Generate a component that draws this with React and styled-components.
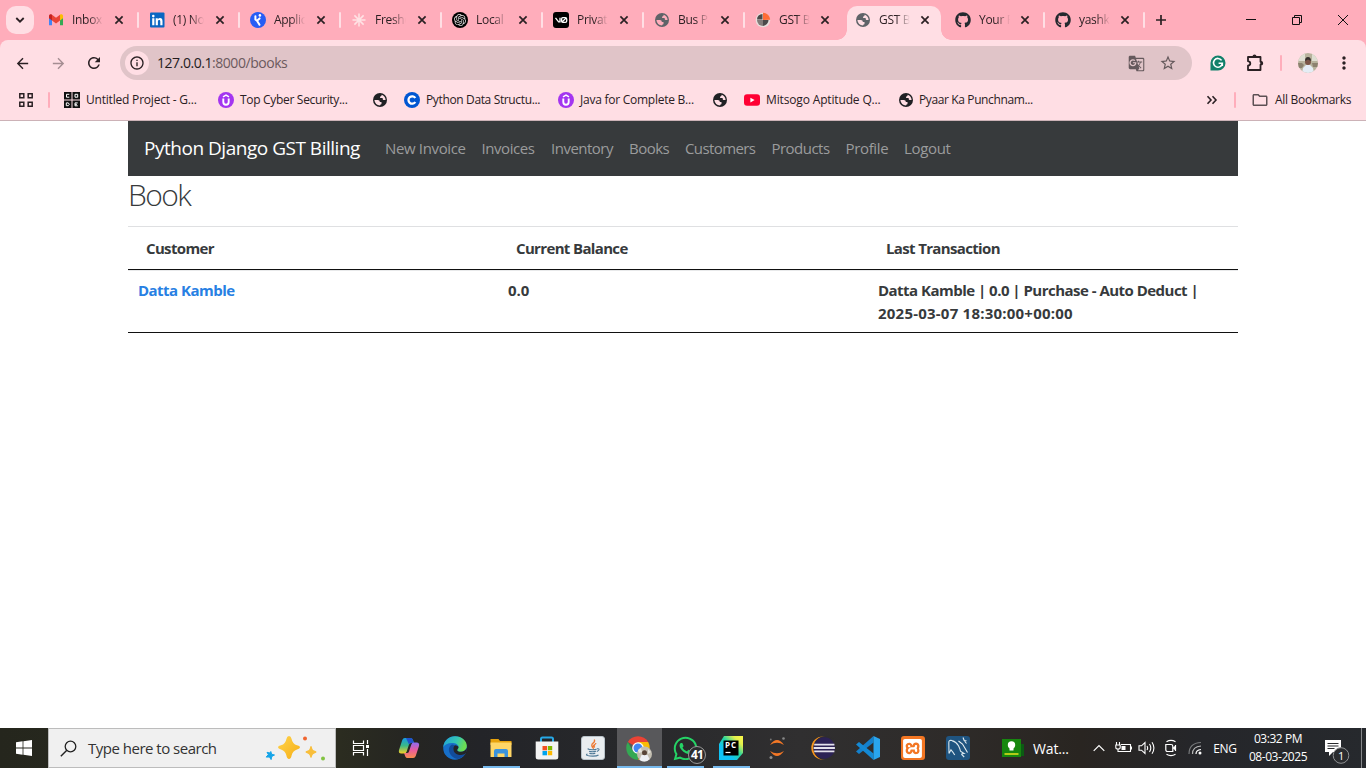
import React from "react";
import styled, { createGlobalStyle, css } from "styled-components";
import { FaGithub, FaWhatsapp, FaJava } from "react-icons/fa";
import { SiOpenai, SiXampp } from "react-icons/si";
import { MdArrowBack, MdArrowForward, MdRefresh, MdStarBorder, MdInfoOutline, MdGTranslate, MdMoreVert, MdOutlineFolder } from "react-icons/md";

const Global = createGlobalStyle`
  * { box-sizing: border-box; }
  body { margin: 0; background: #fff; font-family: "Segoe UI", "Open Sans", "Noto Sans", sans-serif; overflow: hidden; }
  svg { display: block; flex: none; }
`;

const Screen = styled.div`
  width: 1366px; height: 768px; display: flex; flex-direction: column; overflow: hidden;
`;

/* ---------- browser chrome ---------- */
const TabStrip = styled.div`
  height: 40px; flex: none; background: #ffadbb; display: flex; align-items: flex-end;
`;
const TabSearch = styled.div`
  width: 28px; height: 28px; margin: 0 4px 6px 6px; border-radius: 10px; background: #ffdee4;
  display: flex; align-items: center; justify-content: center;
`;
const Tab = styled.div`
  width: ${(p) => p.$w || 101}px; height: 40px; flex: none; display: flex; align-items: center; padding-left: 10px;
`;
const ActiveTab = styled(Tab)`
  width: 94px; height: 34px; margin: 0 4px 0 2px; padding: 0 0 6px 8px; background: #ffdee4;
  border-radius: 10px 10px 0 0; position: relative;
  &::before, &::after {
    content: ""; position: absolute; bottom: 0; width: 10px; height: 10px;
  }
  &::before { left: -10px; background: radial-gradient(circle at 0 0, transparent 9.5px, #ffdee4 10px); }
  &::after { right: -10px; background: radial-gradient(circle at 100% 0, transparent 9.5px, #ffdee4 10px); }
`;
const Favicon = styled.span`
  width: 16px; height: 16px; flex: none; display: flex; align-items: center; justify-content: center;
`;
const TabTitle = styled.span`
  width: 31px; margin-left: 8px; white-space: nowrap; font-size: 12px; line-height: 18px;
  letter-spacing: -0.3px; color: #2b1f22;
  -webkit-mask-image: linear-gradient(90deg, #000 55%, transparent 100%);
  mask-image: linear-gradient(90deg, #000 55%, transparent 100%);
`;
const TabClose = styled.span`
  width: 16px; height: 16px; margin-left: ${(p) => p.$ml}px; display: flex; align-items: center; justify-content: center;
`;
const Divider = styled.span`
  width: 2px; height: 16px; border-radius: 1px; background: ${(p) => p.$c || "#ffdee4"}; margin: 0 ${(p) => p.$mr || 0}px 0 ${(p) => p.$ml || 0}px;
`;
const NewTab = styled.div`
  width: 32px; height: 40px; display: flex; align-items: center; justify-content: center;
`;
const WindowButtons = styled.div`
  margin-left: auto; height: 40px; display: flex;
  svg { width: 46px; height: 40px; }
`;
const Corners = styled.div`
  background: #ffadbb; height: 46px; flex: none;
`;
const Toolbar = styled.div`
  height: 46px; background: #ffdee4; border-radius: 8px 8px 0 0; display: flex; align-items: center; color: #2a2023;
`;
const NavIcon = styled.span`
  width: 36px; height: 46px; display: flex; align-items: center; justify-content: center;
  opacity: ${(p) => (p.$off ? 0.42 : 1)};
  margin-left: ${(p) => p.$ml || 0}px;
`;
const Omnibox = styled.div`
  width: 1072px; height: 34px; margin-left: 8px; border-radius: 17px; background: #e0c4c8;
  display: flex; align-items: center; padding: 0 15px 0 5px;
`;
const SiteInfo = styled.span`
  width: 24px; height: 24px; border-radius: 50%; background: #ffdee4; display: flex; align-items: center; justify-content: center;
`;
const Url = styled.span`
  flex: 1; margin-left: 8px; font-size: 14px; line-height: 20px; letter-spacing: -0.45px; color: #6c5a5e;
  b { font-weight: 400; color: #241c1e; }
`;
const OmniActions = styled.span`
  display: flex; gap: 14px; color: #65595c; align-items: center;
`;
const Extensions = styled.div`
  flex: 1; display: flex; align-items: center; padding-left: 18px;
`;
const Avatar = styled.span`
  width: 20px; height: 20px; margin-left: 16px; border-radius: 50%; overflow: hidden;
`;
const BookmarksBar = styled.div`
  height: 35px; flex: none; background: #ffdee4; border-bottom: 1px solid #ccb2b7; display: flex; align-items: center;
  padding: 0 0 7px 18px; color: #2a2023;
`;
const Bookmark = styled.div`
  display: flex; align-items: center; width: ${(p) => p.$w}px; flex: none; gap: 6px;
  font-size: 12px; line-height: 16px; white-space: nowrap; letter-spacing: ${(p) => p.$ls || 0}px; color: #2a2023;
`;
const BookmarksEnd = styled.div`
  margin-left: auto; display: flex; align-items: center; padding-right: 14px;
`;

/* ---------- page ---------- */
const Page = styled.main`
  flex: 1; background: #fff; min-height: 0;
`;
const Container = styled.div`
  width: 1110px; margin: 0 auto; color: #373a3c; font-size: 15px; line-height: 23px;
`;
const Navbar = styled.nav`
  height: 55px; background: #373a3c; display: flex; align-items: center; padding-left: 16px;
`;
const Brand = styled.span`
  width: 241px; color: #fff; font-size: 19px; letter-spacing: -0.48px; white-space: nowrap;
`;
const NavLink = styled.a`
  width: ${(p) => p.$w}px; color: #9b9c9d; font-size: 15px; letter-spacing: ${(p) => p.$ls}px; white-space: nowrap;
`;
const Title = styled.h2`
  margin: 0; height: 50px; padding-top: 1px; font-size: 30px; font-weight: 300; line-height: 36px; letter-spacing: -1.6px;
`;
const Table = styled.div`
  border-top: 1px solid #dfe0e2; font-weight: 700;
`;
const HeadRow = styled.div`
  display: grid; grid-template-columns: repeat(3, 370px); height: 43px; padding-top: 10px; border-bottom: 1px solid #111;
  span { padding-left: 18px; letter-spacing: -0.65px; }
`;
const Row = styled.div`
  display: grid; grid-template-columns: repeat(3, 370px); height: 63px; padding-top: 8px;
  border-top: 1px solid #e8e9ea; border-bottom: 1px solid #111;
`;
const Cell = styled.div`
  padding-left: 10px; letter-spacing: -0.1px;
`;
const CustomerLink = styled.a`
  color: #2780e3; letter-spacing: -0.52px;
`;
const Line = styled.span`
  display: block; letter-spacing: ${(p) => p.$ls}px; white-space: nowrap;
`;

/* ---------- taskbar ---------- */
const Taskbar = styled.footer`
  height: 40px; flex: none; display: flex; color: #fff;
  background: linear-gradient(90deg, #25261d 0, #2b2c20 340px, #252522 410px, #232428 480px, #27282b 620px, #302f30 800px, #2e2b29 950px, #292521 1080px, #25262a 1200px, #26292d 1366px);
`;
const Start = styled.div`
  width: 48px; display: flex; align-items: center; justify-content: center;
`;
const Search = styled.div`
  width: 288px; background: #f0f0f0; border: 1px solid #bcbcbc; display: flex; align-items: center; padding-left: 11px;
  color: #333; font-size: 15px; letter-spacing: -0.5px;
`;
const SearchHint = styled.span`
  margin-left: 11px; width: 177px; white-space: nowrap;
`;
const AppButton = styled.div`
  width: ${(p) => p.$w || 46}px; height: 40px; display: flex; align-items: center; justify-content: center; position: relative;
  ${(p) => p.$active && css`background: linear-gradient(90deg, transparent 1px, #58585b 1px);`}
  ${(p) => p.$running && css`
    &::after { content: ""; position: absolute; bottom: 0; height: 2px; background: #76b9ed;
      left: ${p.$active ? 1 : 5}px; right: ${p.$active ? 0 : 4}px; }
  `}
`;
const Badge = styled.span`
  position: absolute; left: 26px; top: 18px; width: 18px; height: 18px; border-radius: 50%; border: 1px solid #999;
  background: #2c2d2f; font-size: 12px; font-weight: 700; line-height: 16px; text-align: center; letter-spacing: -0.8px;
`;
const News = styled.div`
  display: flex; align-items: center; margin-left: 22px; width: 85px; gap: 9px; font-size: 14px; letter-spacing: -0.15px; white-space: nowrap;
`;
const TrayIcon = styled.span`
  width: 24px; display: flex; align-items: center; justify-content: center;
`;
const Lang = styled.span`
  width: 36px; text-align: center; align-self: center; font-size: 12px; letter-spacing: -0.35px;
`;
const Clock = styled.div`
  width: 70px; font-size: 12px; line-height: 18px; text-align: center; padding-top: 2px; letter-spacing: -0.45px; white-space: nowrap;
`;
const Notifications = styled.div`
  width: 49px; display: flex; align-items: center; justify-content: center; border-right: 1px solid #85878a;
`;

/* ---------- icons ---------- */
const Disc = styled.span`
  width: ${(p) => p.$size || 16}px; height: ${(p) => p.$size || 16}px; border-radius: ${(p) => p.$r || "50%"}; background: ${(p) => p.$bg}; color: #fff;
  display: flex; align-items: center; justify-content: center; flex: none;
`;
const Cross = () => (
  <svg width="10" height="10" viewBox="0 0 10 10"><path d="M1.4 1.4l7.2 7.2M8.6 1.4L1.4 8.6" stroke="#2b2023" strokeWidth="1.7" /></svg>
);
const Gmail = () => (
  <svg width="16" height="16" viewBox="0 0 16 16">
    <path d="M1 4v9.2h3V6z" fill="#4285f4" /><path d="M15 4v9.2h-3V6z" fill="#34a853" />
    <path d="M1 6.2V4c0-1.7 1.8-2.2 3-1.3v5.7z" fill="#c5221f" /><path d="M12 8.4V2.7c1.2-.9 3-.4 3 1.3v2.2z" fill="#fbbc04" />
    <path d="M4 2.7l4 3 4-3v5.7l-4 3-4-3z" fill="#ea4335" />
  </svg>
);
const LinkedIn = () => (
  <svg width="16" height="16" viewBox="0 0 16 16"><rect x="1" y="0.5" width="14.500" height="15" rx="1" fill="#0a66c2" />
    <circle cx="4.300" cy="4.100" r="1.300" fill="#fff" /><path d="M3.200 6.300h2.200v6.900H3.200zM6.700 6.300h2.100v1c.5-.8 1.300-1.200 2.200-1.200 1.700 0 2.500 1.100 2.500 3.100v4h-2.200V9.600c0-1-.3-1.600-1.100-1.600-.9 0-1.300.6-1.300 1.600v3.600H6.700z" fill="#fff" /></svg>
);
const Compass = () => (
  <svg width="16" height="16" viewBox="0 0 16 16"><circle cx="8" cy="8" r="8" fill="#275df5" />
    <circle cx="9.900" cy="3.400" r="1.300" fill="#fff" /><path d="M9.600 6.400L7 8.800l2.500 4M5.400 4.300v3.200L7 8.800" stroke="#fff" strokeWidth="2" fill="none" strokeLinecap="round" strokeLinejoin="round" /></svg>
);
const Burst = () => (
  <svg width="14" height="14" viewBox="0 0 14 14"><g stroke="#ffe3e5" strokeWidth="1.5"><path d="M7 .5v13M.5 7h13M2.4 2.4l9.2 9.2M11.6 2.4l-9.2 9.2" /></g></svg>
);
const OpenAi = () => (
  <Disc $bg="#000"><SiOpenai size={12} color="#ddd" /></Disc>
);
const VZero = () => (
  <svg width="16" height="16" viewBox="0 0 16 16"><rect width="16" height="16" rx="3" fill="#000" />
    <path d="M2.5 5.8L5.6 9.8H7V5.8M9.8 5.7h2.5q1.4 0 1.4 1.4v1.8q0 1.4-1.4 1.4H9.8q-1.2 0-1.2-1.4V7.1q0-1.4 1.2-1.4zM9 10l4.300-4.100" stroke="#fff" strokeWidth="1.3" fill="none" /></svg>
);
const Globe = ({ c = "#202124", bg = "#ffdee4" }) => (
  <svg width="14" height="14" viewBox="0 0 14 14"><circle cx="7" cy="7" r="7" fill={c} />
    <path d="M8.600 1.700C11 2.300 12.600 4.500 12.600 7H10.500Q9.800 7 9.800 6.200V5.600Q9.800 5.100 9.200 5.100H7.100V4Q7.100 3.300 7.900 3.200 8.700 3 8.600 1.700z" fill={bg} />
    <path d="M1.400 7.100H4.800Q6.900 7.200 6.900 9H8.500V10.800Q8.500 11.400 7.700 11.500 7.100 11.600 7.100 12.600 2 12.500 1.400 7.100z" fill={bg} />
  </svg>
);
const Pie = () => (
  <svg width="16" height="16" viewBox="0 0 16 16"><circle cx="8" cy="8" r="7.300" fill="#e8dfdd" />
    <path d="M7.500 7.500V2A5.500 5.500 0 0 0 2 7.500zM8 8v6a6 6 0 0 0 5.500-6z" fill="#4a4a4a" /><path d="M8 8H2a6 6 0 0 0 6 6z" fill="#817b79" /><path d="M8 8V.8A7 7 0 0 1 15.200 7.800z" fill="#ff6c37" /></svg>
);
const Code = () => (
  <svg width="16" height="16" viewBox="0 0 16 16"><path d="M0 0h7.500v7.500H0zM8.500 0H16v7.500H8.500zM0 8.500h7.500V16H0zM8.500 8.500H16V16H8.500z" fill="#111" />
    <path d="M5.300 2.300H2.500v2.900h2.800M11 2.300h2.700v2.900H11zM2.300 10.900h2l1 1.400-1 1.400h-2zM13.700 10.900H11v2.900h2.700M11 12.300h2" stroke="#fff" strokeWidth="1" fill="none" /></svg>
);
const Udemy = () => (
  <svg width="16" height="16" viewBox="0 0 16 16"><circle cx="8" cy="8" r="8" fill="#a435f0" />
    <path d="M5.300 6.500v3.600q0 2.700 2.700 2.700t2.700-2.700V6.500" stroke="#fff" strokeWidth="1.900" fill="none" /><path d="M5 4.900L8 3.100l3 1.800" stroke="#fff" strokeWidth="1.400" fill="none" /></svg>
);
const Coursera = () => (
  <svg width="16" height="16" viewBox="0 0 16 16"><circle cx="8" cy="8" r="8" fill="#0056d2" />
    <path d="M11.300 10A3.700 3.700 0 1 1 11.300 6" stroke="#fff" strokeWidth="2.300" fill="none" /></svg>
);
const YouTube = () => (
  <svg width="16" height="16" viewBox="0 0 16 16"><rect y="2.300" width="16" height="11.500" rx="3" fill="#ff0033" /><path d="M6.400 5.700v4.700L10.600 8z" fill="#fff" /></svg>
);
const Grammarly = () => (
  <svg width="16" height="16" viewBox="0 0 16 16"><path d="M.5 15.500V8A7.500 7.500 0 1 1 8 15.500z" fill="#11806a" />
    <path d="M11.600 5.400A4.400 4.400 0 1 0 12.300 8.300H8.600M12.300 8.300v2.700" stroke="#fff" strokeWidth="1.600" fill="none" /></svg>
);
const PuzzleSvg = styled.svg`
  margin-left: 20px;
`;
const Puzzle = () => (
  <PuzzleSvg width="18" height="18" viewBox="0 0 18 18"><path d="M2 3h12.500v4.700q.7 0 .7 1.500t-.7 1.500v5.300H2v-4.300q2.300-.4 2.300-2.200T2 7.200z" stroke="#2a2023" strokeWidth="1.800" fill="none" strokeLinejoin="round" /><path d="M6.500 2.500a2 2 0 0 1 4 0zM15 7a2.200 2.200 0 0 1 0 4.400z" fill="#2a2023" /></PuzzleSvg>
);
const Photo = () => (
  <svg width="20" height="20" viewBox="0 0 20 20"><rect width="20" height="20" fill="#b7b29c" /><path d="M0 0h7v8H0zM14 1h6v7h-6z" fill="#dfded2" />
    <path d="M4 20l1-5 3-3h4l3 3 1 5z" fill="#e5edf5" /><circle cx="10" cy="9" r="3" fill="#7b5648" /><path d="M7 8q0-4 3-4t3 4l-3-1.500z" fill="#35302d" /><path d="M0 10l4 0 2 2-2 3H0zM14 10h6v4h-5z" fill="#8c826f" /></svg>
);
const Copilot = () => (
  <svg width="24" height="24" viewBox="0 0 24 24"><defs>
    <linearGradient id="cpA" x1="0" y1="0" x2="0" y2="1"><stop stopColor="#159be6" /><stop offset=".5" stopColor="#3bb985" /><stop offset="1" stopColor="#f6cf27" /></linearGradient>
    <linearGradient id="cpB" x1="0" y1="0" x2="0" y2="1"><stop stopColor="#8c6cf2" /><stop offset=".5" stopColor="#eb5b9b" /><stop offset="1" stopColor="#f88b4e" /></linearGradient></defs>
    <path d="M17 7l-1.300-3.500Q15 2 13.500 2H7.800Q6 2 5.300 4L2 14q-.8 3.500 2.300 3.500h3.200Q9 17.500 9.700 15.500L12 8.500Q12.500 7 14 7z" fill="url(#cpA)" />
    <path d="M9 2h5q1.400.2 2 2l1 3h-3q-1.500.2-2 1.500z" fill="#2053ca" />
    <path d="M7 17l1.300 3.500Q9 22 10.500 22h5.700q1.800 0 2.500-2L22 10q.8-3.500-2.300-3.500h-3.200Q15 6.500 14.300 8.500L12 15.500Q11.500 17 10 17z" fill="url(#cpB)" /></svg>
);
const Edge = () => (
  <svg width="24" height="24" viewBox="0 0 24 24"><defs><linearGradient id="edA" x1="0" y1="0" x2="1" y2=".3"><stop stopColor="#1fa0d8" /><stop offset=".6" stopColor="#35c6b4" /><stop offset="1" stopColor="#6cdd52" /></linearGradient></defs>
    <circle cx="12" cy="12" r="11.800" fill="#176fc9" />
    <path d="M.3 11C1 4.500 6 .2 12 .2c7 0 11.800 4.800 11.800 9.600 0 4-3 6-6 6-2.300 0-3.600-.8-3.600-1.600s1.300-1.200 1.300-3.200C15.500 8.500 12.500 7 9 7 4.500 7 1.500 9 .3 11z" fill="url(#edA)" />
    <path d="M9 8.500c-3 1.500-3.800 5-2.400 8.200 1.200 3 4 5.500 8 6.300 3-.6 5.700-2.400 7.200-4.800-4.500 2-11.500.5-11.500-5.500 0-1.500.7-2.500 1.700-3.400z" fill="#124c9b" />
    <path d="M14.200 14.200c.5 1 1.700 1.600 3.600 1.600 2.600 0 5-1.500 5.800-3.800.6 2-.3 5-1.800 6.200-4.500 2-11.500.5-11.500-5.500 0-1.500.7-2.500 1.700-3.400 2 0 3.500 1 3.500 2s-1.400 1.900-1.300 2.900z" fill="#232428" /></svg>
);
const Explorer = () => (
  <svg width="22" height="22" viewBox="0 0 22 22"><path d="M.5 2h8l1.500 2H21.500v4H.5z" fill="#e8a20c" /><path d="M.5 5.500h21V20H.5z" fill="#ffd667" />
    <path d="M4 20v-6q0-2 2-2h10q2 0 2 2v6h-3.500v-3.500h-7V20z" fill="#3b93dd" /></svg>
);
const Store = () => (
  <svg width="24" height="24" viewBox="0 0 24 24"><path d="M6 6V3q0-1.500 1.500-1.500h9Q18 1.500 18 3v3" stroke="#27a8e6" strokeWidth="2" fill="none" />
    <path d="M.7 5.500h22.600V21q0 2.500-2.500 2.500H3.200Q.7 23.500.7 21z" fill="#f3f3f3" />
    <path d="M7.500 10H12v4.300H7.500z" fill="#f25022" /><path d="M12.800 10h4.400v4.300h-4.400z" fill="#7fba00" /><path d="M7.500 15H12v4.300H7.500z" fill="#00a4ef" /><path d="M12.800 15h4.400v4.300h-4.400z" fill="#ffb900" /></svg>
);
const JavaBox = styled.span`
  width: 24px; height: 24px; border-radius: 3px; background: #e9edf0; border: 1px solid #b8c2c9;
  display: flex; align-items: center; justify-content: center;
`;
const Java = () => (
  <JavaBox>
    <svg width="20" height="20" viewBox="0 0 20 20" fill="none"><path d="M11.300 1.500q1 2-1.200 3.600-2.700 2.200 0 4.900-.4-2 .9-3 1.900-1 1.900-2M12 6.500q-1.700 1.300-.2 3" stroke="#ee7a35" strokeWidth="1.300" />
      <path d="M5.500 10.500q-2 1 4 1.200 3 0 4-.5M6 13.200q3.500 1 7 0M6.300 15.200q3.200 1 6 0M13.800 10.800q3-.5 2 1.200-.7 1-2 1.500M4.500 16q-3 1.200 2.500 2 6.500.5 8.500-1" stroke="#4d7896" strokeWidth="1.100" /></svg>
  </JavaBox>
);
const Chrome = () => (
  <svg width="28" height="28" viewBox="0 0 28 28"><g transform="translate(1 2)">
    <path d="M12 12L1.800 6A11.800 11.800 0 0 1 22.200 6z" fill="#ea4335" />
    <path d="M12 12v11.800A11.800 11.800 0 0 1 1.800 6.100L7 15z" fill="#34a853" /><path d="M12 6h10.200A12 12 0 0 1 12 23.800L17 15z" fill="#fbbc04" /><circle cx="12" cy="12" r="5.800" fill="#fff" /><circle cx="12" cy="12" r="4.500" fill="#4285f4" /></g>
    <circle cx="19.500" cy="20" r="7.500" fill="#c3beb1" /><path d="M14.500 26l2-5h6l2 4q-4 4.500-10 1z" fill="#edf0f4" /><path d="M13 16l3-2 1 4-3 1zM23 15l3 3-3 2z" fill="#e6e5de" /><circle cx="19.500" cy="18.800" r="2.500" fill="#574437" /></svg>
);
const PyCharm = () => (
  <svg width="24" height="24" viewBox="0 0 24 24"><defs><linearGradient id="pcA" x1="0" y1="1" x2="1" y2="0"><stop offset=".3" stopColor="#10c3f5" /><stop offset=".55" stopColor="#22d4a0" /><stop offset=".8" stopColor="#e6f04c" /><stop offset="1" stopColor="#fcf84a" /></linearGradient></defs>
    <path d="M5 0h19v17l-6 7H0V8z" fill="url(#pcA)" /><path d="M4.500 4.500h15v15h-15z" fill="#000" />
    <text x="6" y="12.200" fontFamily="Open Sans, sans-serif" fontSize="8" fontWeight="700" fill="#fff" textLength="11">PC</text><path d="M6.500 16.500h5" stroke="#fff" strokeWidth="1.200" /></svg>
);
const Jupyter = () => (
  <svg width="20" height="24" viewBox="0 0 20 24"><path d="M3 9Q10-1 17 9 10 4.500 3 9zM3 15q7 10 14 0-7 4.500-14 0z" fill="#f37726" /><circle cx="16.500" cy="2.500" r="1.300" fill="#888" /><circle cx="3.800" cy="3.500" r=".9" fill="#777" /><circle cx="4" cy="21.500" r="1.500" fill="#8d8d8d" /></svg>
);
const Eclipse = () => (
  <svg width="24" height="24" viewBox="0 0 24 24"><circle cx="11.800" cy="12" r="11.500" fill="#f7941e" /><circle cx="14.300" cy="12" r="12" fill="#2f2e2f" /><circle cx="13.300" cy="12" r="10.700" fill="#2c2255" />
    <path d="M3.200 8.700h20.200M2.700 12h21.200M3.200 15.300h20.200" stroke="#e4e2ec" strokeWidth="1.800" /></svg>
);
const VsCode = () => (
  <svg width="24" height="24" viewBox="0 0 24 24"><path d="M17.500 0v6.500L3 18 0 15.500z" fill="#1480cc" /><path d="M0 8.500L3 6l14.500 11.500V24z" fill="#1489d4" /><path d="M17.500 0L24 3v18l-6.500 3z" fill="#29a5ee" /></svg>
);
const MySql = () => (
  <svg width="24" height="24" viewBox="0 0 24 24"><rect width="24" height="24" rx="3" fill="#1f5480" />
    <path d="M3 17.500L2.800 7Q2.600 3.500 6 4.600q4.200 1.200 6.500 5.200 1.300 2.600 2 5.400l3.500 2.300q-2.500 0-2.300 1l2.500 2.500M3 17.500l2-3.700q2.700 3 3.700 5.200" stroke="#dbe8ee" strokeWidth="1.100" fill="none" />
    <path d="M12.500 5l4 3 5 8.500M17 1.500l1.200 3 2.300.3M18.200 4.500l2.300 3" stroke="#e6eef2" strokeWidth="1.100" fill="none" /></svg>
);
const Idea = () => (
  <svg width="22" height="20" viewBox="0 0 22 20"><path d="M17 6h5v12h-5z" fill="#0b5c13" /><path d="M0 1h19v18H0z" fill="#17870f" />
    <circle cx="9.500" cy="7" r="3.700" fill="#fff" /><path d="M7.500 9h4v3.500h-4z" fill="#fff" /><path d="M2.500 16h14" stroke="#e9e31d" strokeWidth="1.500" /></svg>
);
const Sparkles = () => (
  <svg width="62" height="28" viewBox="0 0 62 28"><defs><linearGradient id="spA" x1="0" y1="0" x2="1" y2="1"><stop stopColor="#ffd44d" /><stop offset="1" stopColor="#f6ae15" /></linearGradient></defs>
    <path d="M24 2q2 0 2.600 3 .9 5 5.400 6.300 3 .7 3 2t-3 2.300q-4.500 1.400-5.400 6-.6 3.400-2.600 3.400t-2.600-3.400q-.9-4.600-5.400-6-3-1-3-2.300t3-2Q20.500 10 21.400 5 22 2 24 2z" fill="url(#spA)" />
    <path d="M46 12q.8 0 1.200 2.400.4 1.800 2.600 2.400 1.700.5 1.700 1.200t-1.700 1.200q-2.200.6-2.600 2.400Q46.800 24 46 24t-1.200-2.400q-.4-1.800-2.600-2.400-1.700-.5-1.700-1.200t1.700-1.200q2.200-.6 2.600-2.400Q45.200 12 46 12z" fill="#f8be3b" />
    <path d="M5.800 17.500l.8 2.700 2.900.8-2.700 1.400-.7 3.200-1.600-2.600-3.300.1 2.100-2.500-1.300-2.300 2.800.7z" stroke="#14a4e8" strokeLinejoin="round" fill="#14a4e8" /><circle cx="40" cy="4.500" r="2" fill="#f0652f" /><circle cx="58" cy="24.500" r="2" fill="#82c341" /></svg>
);

const github = <FaGithub size={16} color="#24292f" />;
const tabs = [
  [<Gmail />, "Inbox"], [<LinkedIn />, "(1) No"], [<Compass />, "Applic"], [<Burst />, "Freshe"],
  [<OpenAi />, "Local"], [<VZero />, "Privat"], [<Globe c="#5f6368" bg="#ffadbb" />, "Bus Pa"],
];
const lateTabs = [[github, "Your F"], [github, "yashk"]];

const navLinks = [["New Invoice", 96.5, -0.35], ["Invoices", 69.5, -0.42], ["Inventory", 78, -0.5], ["Books", 56, -0.5], ["Customers", 86.5, -0.6], ["Products", 74, -0.52], ["Profile", 58.5, -0.35], ["Logout", 60, -0.33]];

const TabBody = ({ icon, title, gap = 8 }) => (
  <><Favicon>{icon}</Favicon><TabTitle>{title}</TabTitle><TabClose $ml={gap}><Cross /></TabClose></>
);

export default function App() {
  return (
    <>
      <Global />
      <Screen>
        <TabStrip>
          <TabSearch><svg width="10" height="8" viewBox="0 0 10 8"><path d="M1.300 2L5 5.700 8.700 2" stroke="#2b2023" strokeWidth="1.800" fill="none" /></svg></TabSearch>
          {tabs.map(([icon, title]) => (
            <Tab key={title}><TabBody icon={icon} title={title} /><Divider $ml={10} /></Tab>
          ))}
          <Tab $w={100}><TabBody icon={<Pie />} title="GST B" gap={7} /></Tab>
          <ActiveTab><TabBody icon={<Globe c="#5f6368" />} title="GST B" gap={7} /></ActiveTab>
          {lateTabs.map(([icon, title]) => (
            <Tab key={title} $w={100}><TabBody icon={icon} title={title} gap={7} /><Divider $ml={10} /></Tab>
          ))}
          <NewTab><svg width="12" height="12" viewBox="0 0 12 12"><path d="M6 1v10M1 6h10" stroke="#2b2023" strokeWidth="1.700" /></svg></NewTab>
          <WindowButtons>
            <svg viewBox="0 0 46 40"><path d="M18 19.500h10" stroke="#111" /></svg>
            <svg viewBox="0 0 46 40"><path d="M18.500 17.500h7v7h-7zM20.500 17.500v-2h7v7h-2" stroke="#111" fill="none" /></svg>
            <svg viewBox="0 0 46 40"><path d="M18 15l10 10M28 15L18 25" stroke="#111" /></svg>
          </WindowButtons>
        </TabStrip>
        <Corners>
          <Toolbar>
            <NavIcon $ml={4}><MdArrowBack size={17} /></NavIcon>
            <NavIcon $off><MdArrowForward size={17} /></NavIcon>
            <NavIcon><MdRefresh size={18} /></NavIcon>
            <Omnibox>
              <SiteInfo><MdInfoOutline size={16} /></SiteInfo>
              <Url><b>127.0.0.1</b>:8000/books</Url>
              <OmniActions><MdGTranslate size={17} /><MdStarBorder size={18} /></OmniActions>
            </Omnibox>
            <Extensions>
              <Grammarly />
              <Puzzle />
              <Divider $c="#ffadbb" $ml={16} />
              <Avatar><Photo /></Avatar>
              <NavIcon $ml={8}><MdMoreVert size={20} /></NavIcon>
            </Extensions>
          </Toolbar>
        </Corners>
        <BookmarksBar>
          <svg width="16" height="16" viewBox="0 0 16 16"><path d="M1.800 1.800h4v4h-4zM10.200 1.800h4v4h-4zM1.800 10.200h4v4h-4zM10.200 10.200h4v4h-4z" stroke="#2a2023" strokeWidth="1.500" fill="none" /></svg>
          <Divider $c="#ffadbb" $ml={14} $mr={14} />
          <Bookmark $w={154} $ls={-0.2}><Code />Untitled Project - G...</Bookmark>
          <Bookmark $w={155} $ls={-0.31}><Udemy />Top Cyber Security...</Bookmark>
          <Bookmark $w={31}><Globe /></Bookmark>
          <Bookmark $w={154} $ls={-0.36}><Coursera />Python Data Structu...</Bookmark>
          <Bookmark $w={155} $ls={-0.25}><Udemy />Java for Complete B...</Bookmark>
          <Bookmark $w={31}><Globe /></Bookmark>
          <Bookmark $w={155} $ls={-0.15}><YouTube />Mitsogo Aptitude Q...</Bookmark>
          <Bookmark $w={140} $ls={-0.38}><Globe />Pyaar Ka Punchnam...</Bookmark>
          <BookmarksEnd>
            <svg width="12" height="10" viewBox="0 0 12 10"><path d="M1.500 1.200L5 5 1.500 8.800M6.500 1.200L10 5 6.500 8.800" stroke="#2a2023" strokeWidth="1.600" fill="none" /></svg>
            <Divider $c="#ffadbb" $ml={16} $mr={15} />
            <Bookmark $w={101} $ls={-0.3}><MdOutlineFolder size={18} color="#5d5054" />All Bookmarks</Bookmark>
          </BookmarksEnd>
        </BookmarksBar>

        <Page>
          <Container>
            <Navbar>
              <Brand>Python Django GST Billing</Brand>
              {navLinks.map(([t, w, ls]) => <NavLink key={t} $w={w} $ls={ls}>{t}</NavLink>)}
            </Navbar>
            <Title>Book</Title>
            <Table>
              <HeadRow><span>Customer</span><span>Current Balance</span><span>Last Transaction</span></HeadRow>
              <Row>
                <Cell><CustomerLink>Datta Kamble</CustomerLink></Cell>
                <Cell>0.0</Cell>
                <Cell>
                  <Line $ls={-0.52}>Datta Kamble | 0.0 | Purchase - Auto Deduct |</Line>
                  <Line $ls={0.22}>2025-03-07 18:30:00+00:00</Line>
                </Cell>
              </Row>
            </Table>
          </Container>
        </Page>

        <Taskbar>
          <Start><svg width="16" height="16" viewBox="0 0 16 16"><path d="M0 2.200L6.600 1.300V7.600H0zM7.400 1.200L16 0v7.600H7.400zM0 8.400h6.600v6.300L0 13.800zM7.400 8.400H16V16l-8.600-1.200z" fill="#fff" /></svg></Start>
          <Search>
            <svg width="17" height="17" viewBox="0 0 17 17"><circle cx="10.500" cy="6.500" r="5.300" stroke="#222" strokeWidth="1.300" fill="none" /><path d="M6.800 10.200L.8 16.200" stroke="#222" strokeWidth="1.400" /></svg>
            <SearchHint>Type here to search</SearchHint>
            <Sparkles />
          </Search>
          <AppButton $w={50}><svg width="18" height="18" viewBox="0 0 18 18"><path d="M1.500 1.500v3h10v-3M1.500 6.500h10v5h-10zM1.500 16.500v-3h10v3M15.500 1v4M15.500 10v7" stroke="#fff" strokeWidth="1.200" fill="none" /><path d="M14 6h3v3h-3z" fill="#fff" /></svg></AppButton>
          <AppButton><Copilot /></AppButton>
          <AppButton><Edge /></AppButton>
          <AppButton $running><Explorer /></AppButton>
          <AppButton><Store /></AppButton>
          <AppButton><Java /></AppButton>
          <AppButton $running $active><Chrome /></AppButton>
          <AppButton $running><FaWhatsapp size={27} color="#25d366" /><Badge>41</Badge></AppButton>
          <AppButton $running><PyCharm /></AppButton>
          <AppButton><Jupyter /></AppButton>
          <AppButton $w={45}><Eclipse /></AppButton>
          <AppButton $w={45}><VsCode /></AppButton>
          <AppButton $w={45}><Disc $bg="#f37623" $r="3px" $size={24}><SiXampp size={19} /></Disc></AppButton>
          <AppButton $w={45}><MySql /></AppButton>
          <News><Idea />Wat...</News>
          <TrayIcon><svg width="12" height="8" viewBox="0 0 12 8"><path d="M.7 6.800L6 1.500l5.300 5.300" stroke="#fff" strokeWidth="1.200" fill="none" /></svg></TrayIcon>
          <TrayIcon><svg width="17" height="14" viewBox="0 0 17 14"><path d="M6 3.500h9.500v7h-10M16.500 5.500v3M1.500 1v3M4.500 1v3M.8 4h4.400v2.500q0 1.500-2.200 1.500T.8 6.500zM3 8v2.500h2.500" stroke="#fff" strokeWidth="1.100" fill="none" /><path d="M6.500 5h4v4h-4z" fill="#fff" /></svg></TrayIcon>
          <TrayIcon><svg width="18" height="14" viewBox="0 0 18 14"><path d="M1 4.800h2.500L7 1.500v11L3.500 9.200H1zM9 5q1.300 2 0 4M11.500 3q2.600 4 0 8M14 1.300q3.800 5.700 0 11.400" stroke="#fff" strokeWidth="1.100" fill="none" /></svg></TrayIcon>
          <TrayIcon><svg width="14" height="18" viewBox="0 0 14 18"><path d="M2.500 2.700q4.500-2.500 9 0M2.500 15.300q4.500 2.500 9 0M1.800 5.500H7q1.800 0 1.800 1.800v5.200H3.600q-1.800 0-1.800-1.800zM11.500 6v6" stroke="#fff" strokeWidth="1.200" fill="none" /><path d="M9 8.500l2.500-2v5L9 9.500z" fill="#fff" /></svg></TrayIcon>
          <TrayIcon><svg width="14" height="14" viewBox="0 0 14 14"><g stroke="#77797b" strokeWidth="1.200" fill="none"><path d="M1 13Q1 2 13 1.500" /><path d="M4.500 13q0-7.500 8.500-8" stroke="#b6b6b6" /><path d="M8 13q0-4 5-4.500" stroke="#fff" /></g><circle cx="12" cy="12" r="1.500" fill="#fff" /></svg></TrayIcon>
          <Lang>ENG</Lang>
          <Clock>03:32 PM<br />08-03-2025</Clock>
          <Notifications>
            <svg width="26" height="32" viewBox="0 0 26 32"><path d="M1 8h16v12H9l-4 4v-4H1z" fill="#fff" /><path d="M3.500 11.500h11M3.500 14h11M3.500 16.500h7" stroke="#292b2e" strokeWidth="1.100" />
              <circle cx="17" cy="23.500" r="7.800" fill="#2a2c2f" stroke="#8f9193" /><text x="14" y="27.500" fontSize="11" fill="#fff">1</text></svg>
          </Notifications>
        </Taskbar>
      </Screen>
    </>
  );
}
